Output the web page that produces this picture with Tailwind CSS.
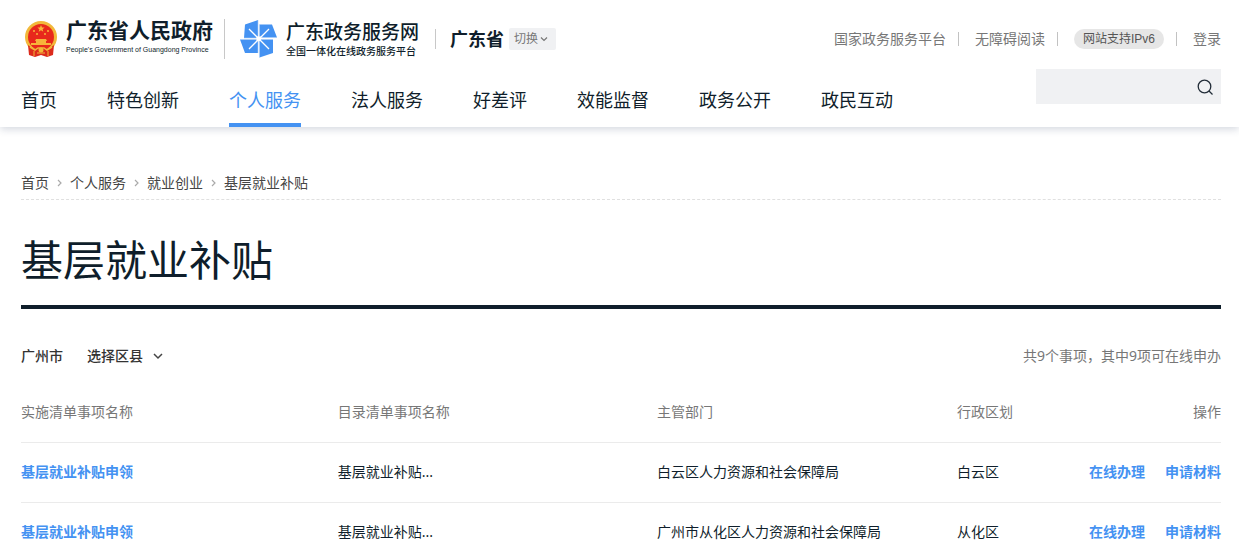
<!DOCTYPE html>
<html lang="zh-CN">
<head>
    <meta charset="UTF-8">
    <meta name="viewport" content="width=device-width, initial-scale=1.0">
    <title>基层就业补贴 - 广东政务服务网</title>
    <script src="https://cdn.jsdelivr.net/npm/@tailwindcss/browser@4"></script>
    <style>
        body { font-family: "Noto Sans", "Noto Sans CJK SC", sans-serif; }
    </style>
</head>
<body class="bg-white text-[#0f1e2b] text-sm">

    <header class="pl-[21px] pr-[18px] pt-2 shadow-[0_2px_8px_rgba(30,50,90,0.2)]">
        <!-- Logos, region and account links -->
        <div class="flex items-center justify-between h-[61px]">
            <div class="flex items-center">
                <a href="#" class="flex items-center pl-[3px]">
                    <svg class="w-[34px] h-[36px] mr-2" viewBox="0 0 34 36" aria-hidden="true">
                        <circle cx="17" cy="16" r="16" fill="#f2b83a"/>
                        <circle cx="17" cy="16" r="13" fill="#e8281c"/>
                        <path d="M4 24L9 28L17 26L25 28L30 24L29 34L23 36L17 34L11 36L5 34Z" fill="#dc2a1c"/>
                        <path d="M17 4l1 2.600h2.600l-2 1.600.700 2.600-2.300-1.500-2.300 1.500.700-2.600-2-1.600h2.600z" fill="#f7b53a"/>
                        <g fill="#f7b53a">
                            <circle cx="10" cy="10" r="1"/><circle cx="24" cy="10" r="1"/>
                            <circle cx="13" cy="13" r="1"/><circle cx="21" cy="13" r="1"/>
                            <path d="M12 18h10l1 2h-1v2h5v2H7v-2h5v-2h-1z"/>
                        </g>
                        <path d="M6 26L11 29L14 27H20L23 29L28 26" fill="none" stroke="#f2b83a" stroke-width="1.500"/>
                        <circle cx="17" cy="29" r="2.500" fill="#f2b83a"/>
                        <path d="M10 30V35M24 30V35M13 32H21" stroke="#f2b83a"/>
                    </svg>
                    <span class="block pb-1">
                        <span class="block text-[21px] leading-[27px] font-bold">广东省人民政府</span>
                        <span class="block text-[7px] leading-[12px] font-['Liberation_Sans']">People's Government of Guangdong Province</span>
                    </span>
                </a>
                <span class="w-px h-10 bg-[#c8c8c8] ml-[11px] mr-[15px]"></span>
                <a href="#" class="flex items-center">
                    <svg class="w-[38px] h-[38px] mr-2" viewBox="0 0 38 38" aria-hidden="true">
                        <path d="M5 4.500L18 0V18H4Z M19.500 4.500H32L37 17.500H19.500Z M19.500 19.500H33V33L19.500 37.500Z M0 19.500H18V33H5Z" fill="#4492f2"/>
                        <path d="M18 0V18H4M19.500 4.500V17.500H37M33 19.500H19.500V37.500M0 19.500H18V33" fill="none" stroke="#a9cdf9" stroke-width=".6"/>
                        <path d="M9 9L29 29M29 9L9 29" stroke="#fff" stroke-width="1.300"/>
                        <path d="M16.500 16.500H21V21H16.500Z" fill="#fff"/>
                    </svg>
                    <span class="block">
                        <span class="block text-[19px] leading-[24px] font-medium">广东政务服务网</span>
                        <span class="block text-[10px] leading-[14px] font-medium">全国一体化在线政务服务平台</span>
                    </span>
                </a>
                <span class="w-px h-5 bg-[#c8c8c8] ml-4 mr-[14px]"></span>
                <strong class="text-lg">广东省</strong>
                <button type="button" class="flex items-center gap-px h-[22px] ml-[5px] pl-[5px] pr-[7px] bg-[#f0f1f3] rounded-xs text-xs text-[#777]">
                    切换
                    <svg class="w-[10px] h-[10px]" viewBox="0 0 10 10" fill="none" stroke="#777" stroke-width="1.200" aria-hidden="true"><path d="M2 3.500L5 6.500L8 3.500"/></svg>
                </button>
            </div>
            <div class="flex items-center text-[#777]">
                <a href="#">国家政务服务平台</a>
                <span class="w-px h-[14px] bg-[#c2c2c2] ml-3 mr-4"></span>
                <a href="#">无障碍阅读</a>
                <span class="w-px h-[14px] bg-[#c2c2c2] ml-3 mr-4"></span>
                <a href="#" class="px-[9px] h-5 leading-5 rounded-full bg-[#e6e6e6] text-xs text-[#555] font-['Liberation_Sans','Noto_Sans_CJK_SC']">网站支持IPv6</a>
                <span class="w-px h-[14px] bg-[#c2c2c2] ml-3 mr-4"></span>
                <a href="#">登录</a>
            </div>
        </div>

        <!-- Main navigation -->
        <div class="flex justify-between items-start">
            <nav class="flex gap-[50px] text-lg leading-[27px]">
                <a href="#" class="pt-[18px] pb-[9px] border-b-4 border-transparent">首页</a>
                <a href="#" class="pt-[18px] pb-[9px] border-b-4 border-transparent">特色创新</a>
                <a href="#" class="pt-[18px] pb-[9px] border-b-4 border-[#4492f2] text-[#4492f2]">个人服务</a>
                <a href="#" class="pt-[18px] pb-[9px] border-b-4 border-transparent">法人服务</a>
                <a href="#" class="pt-[18px] pb-[9px] border-b-4 border-transparent">好差评</a>
                <a href="#" class="pt-[18px] pb-[9px] border-b-4 border-transparent">效能监督</a>
                <a href="#" class="pt-[18px] pb-[9px] border-b-4 border-transparent">政务公开</a>
                <a href="#" class="pt-[18px] pb-[9px] border-b-4 border-transparent">政民互动</a>
            </nav>
            <form class="flex items-center w-[185px] h-[35px] bg-[#f0f1f3] pr-[7px]">
                <input type="search" aria-label="搜索" class="flex-1 min-w-0 h-full px-2 outline-none">
                <button type="button" aria-label="搜索">
                    <svg class="block w-[18px] h-[18px]" viewBox="0 0 18 18" fill="none" stroke="#222d38" stroke-width="1.300" aria-hidden="true"><circle cx="8.500" cy="8.500" r="6.300"/><path d="M13 13L16.500 16.500"/></svg>
                </button>
            </form>
        </div>
    </header>

    <main class="pl-[21px] pr-[18px] pt-[42px]">
        <nav aria-label="面包屑" class="flex items-center pb-[2px] leading-7 text-[#444] border-b border-dashed border-[#e0e0e0]">
            <a href="#">首页</a>
            <svg class="w-[5px] h-2 mx-2" viewBox="0 0 5 8" fill="none" stroke="#aaa" stroke-width="1.200" aria-hidden="true"><path d="M1 1L4 4L1 7"/></svg>
            <a href="#">个人服务</a>
            <svg class="w-[5px] h-2 mx-2" viewBox="0 0 5 8" fill="none" stroke="#aaa" stroke-width="1.200" aria-hidden="true"><path d="M1 1L4 4L1 7"/></svg>
            <a href="#">就业创业</a>
            <svg class="w-[5px] h-2 mx-2" viewBox="0 0 5 8" fill="none" stroke="#aaa" stroke-width="1.200" aria-hidden="true"><path d="M1 1L4 4L1 7"/></svg>
            <span>基层就业补贴</span>
        </nav>

        <h1 class="mt-7 pb-[14px] text-[42px] leading-[63px] border-b-4 border-[#0f1e2b]">基层就业补贴</h1>

        <div class="flex justify-between pt-9 leading-[22px]">
            <div class="flex gap-6 font-medium text-[#333]">
                <span>广州市</span>
                <button type="button" class="flex items-center gap-[10px]">
                    选择区县
                    <svg class="w-[10px] h-[10px]" viewBox="0 0 10 10" fill="none" stroke="#444" stroke-width="1.500" aria-hidden="true"><path d="M1 3L5 7L9 3"/></svg>
                </button>
            </div>
            <p class="text-[#777]">共9个事项，其中9项可在线申办</p>
        </div>

        <table class="w-full mt-[15px] table-fixed text-left">
            <thead>
                <tr class="h-[60px] border-b border-[#ebebeb] text-[#777]">
                    <th class="w-[26.4%] font-normal">实施清单事项名称</th>
                    <th class="w-[26.6%] font-normal">目录清单事项名称</th>
                    <th class="w-[25%] font-normal">主管部门</th>
                    <th class="font-normal">行政区划</th>
                    <th class="font-normal text-right">操作</th>
                </tr>
            </thead>
            <tbody>
                <tr class="h-[60px] border-b border-[#ebebeb]">
                    <td><a href="#" class="font-bold text-[#4492f2]">基层就业补贴申领</a></td>
                    <td>基层就业补贴...</td>
                    <td>白云区人力资源和社会保障局</td>
                    <td>白云区</td>
                    <td>
                        <div class="flex justify-end gap-5 whitespace-nowrap font-bold text-[#4492f2]">
                            <a href="#">在线办理</a>
                            <a href="#">申请材料</a>
                        </div>
                    </td>
                </tr>
                <tr class="h-[60px]">
                    <td><a href="#" class="font-bold text-[#4492f2]">基层就业补贴申领</a></td>
                    <td>基层就业补贴...</td>
                    <td>广州市从化区人力资源和社会保障局</td>
                    <td>从化区</td>
                    <td>
                        <div class="flex justify-end gap-5 whitespace-nowrap font-bold text-[#4492f2]">
                            <a href="#">在线办理</a>
                            <a href="#">申请材料</a>
                        </div>
                    </td>
                </tr>
            </tbody>
        </table>
    </main>

</body>
</html>
